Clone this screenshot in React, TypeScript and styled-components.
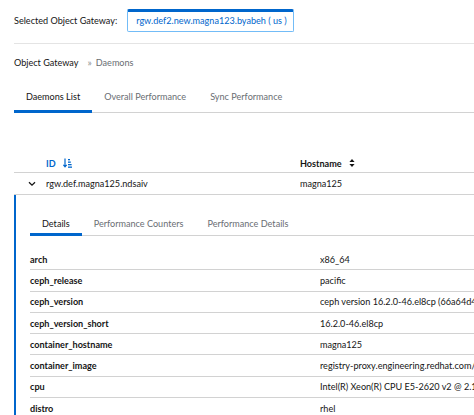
import React from "react";
import styled, { createGlobalStyle } from "styled-components";

const Global = createGlobalStyle`
  html, body { margin: 0; padding: 0; background: #fff; }
  body { font-family: Lato, "Liberation Sans", sans-serif; font-size: 9.1px; color: #151515; }
  * { box-sizing: border-box; }
`;

const Page = styled.div`
  width: 474px;
  height: 415px;
  overflow: hidden;
  padding-left: 14px;
`;

const GatewayBar = styled.div`
  display: flex;
  align-items: center;
  gap: 10px;
  padding-top: 9px;
  padding-bottom: 11px;
  border-bottom: 1px solid #e4e4e4;
`;

const Label = styled.span`
  color: #151515;
`;

const GatewayBox = styled.div`
  height: 23px;
  width: 167px;
  border: 1px solid #73bcf7;
  border-top: 3px solid #06c;
  border-radius: 2px;
  color: #06c;
  display: flex;
  align-items: center;
  padding-left: 8px;
  padding-bottom: 2px;
  white-space: nowrap;
`;

const Breadcrumb = styled.div`
  display: flex;
  align-items: center;
  height: 36px;
  gap: 9px;
`;

const Crumb = styled.span<{ $active?: boolean }>`
  color: ${(p) => (p.$active ? "#6a6e73" : "#151515")};
`;

const Sep = styled.span`
  color: #8a8d90;
  font-size: 10px;
  margin-right: -5px;
`;

const Tabs = styled.div`
  display: flex;
  border-bottom: 1px solid #d2d2d2;
`;

const Tab = styled.div<{ $active?: boolean; $pt?: number }>`
  padding: ${(p) => p.$pt ?? 3}px 12px 0;
  height: 33px;
  display: flex;
  align-items: center;
  color: ${(p) => (p.$active ? "#151515" : "#6a6e73")};
  border-bottom: 3px solid ${(p) => (p.$active ? "#06c" : "transparent")};
  margin-bottom: -1px;
  white-space: nowrap;
`;

const Table = styled.div`
  margin-top: 38px;
`;

const HeadRow = styled.div`
  display: grid;
  grid-template-columns: 32px 254px 1fr;
  height: 22px;
  padding-top: 3px;
  align-items: center;
  border-bottom: 1px solid #d2d2d2;
`;

const HeadCell = styled.div<{ $blue?: boolean }>`
  display: flex;
  align-items: center;
  gap: 7px;
  font-weight: 700;
  color: ${(p) => (p.$blue ? "#06c" : "#151515")};
`;

const Row = styled.div`
  display: grid;
  grid-template-columns: 32px 254px 1fr;
  height: 22px;
  align-items: center;
  border-bottom: 1px solid #d2d2d2;
`;

const Toggle = styled.div`
  display: flex;
  justify-content: center;
  padding-left: 3px;
  padding-top: 1px;
`;

const Expanded = styled.div`
  border-left: 2px solid #06c;
  padding-left: 14px;
  padding-top: 8px;
`;

const DetailTable = styled.div`
  margin-top: 13px;
`;

const DetailRow = styled.div`
  display: grid;
  grid-template-columns: 290px 1fr;
  height: 21.3px;
  align-items: center;
  border-bottom: 1px solid #d2d2d2;
  white-space: nowrap;
`;

const Key = styled.div`
  font-weight: 700;
`;

const Value = styled.div`
  color: #151515;
  overflow: hidden;
`;

const SortAmount = () => (
  <svg width="9" height="10" viewBox="0 0 9 10">
    <path d="M2 0.5 V8.5 M0.3 6.8 L2 8.8 L3.7 6.8" stroke="#06c" strokeWidth="1.2" fill="none" />
    <rect x="5" y="1" width="2" height="1.3" fill="#06c" />
    <rect x="5" y="3.5" width="2.8" height="1.3" fill="#06c" />
    <rect x="5" y="6" width="3.6" height="1.3" fill="#06c" />
    <rect x="5" y="8.5" width="4" height="1.3" fill="#06c" />
  </svg>
);

const SortBoth = () => (
  <svg width="6" height="8" viewBox="0 0 6 8">
    <path d="M3 0 L5.6 3 H0.4 Z M3 8 L5.6 5 H0.4 Z" fill="#151515" />
  </svg>
);

const Chevron = () => (
  <svg width="8" height="6" viewBox="0 0 8 6">
    <path d="M1 1.2 L4 4.2 L7 1.2" stroke="#151515" strokeWidth="1.3" fill="none" />
  </svg>
);

const details: [string, string][] = [
  ["arch", "x86_64"],
  ["ceph_release", "pacific"],
  ["ceph_version", "ceph version 16.2.0-46.el8cp (66a64d40"],
  ["ceph_version_short", "16.2.0-46.el8cp"],
  ["container_hostname", "magna125"],
  ["container_image", "registry-proxy.engineering.redhat.com/rh"],
  ["cpu", "Intel(R) Xeon(R) CPU E5-2620 v2 @ 2.10"],
  ["distro", "rhel"],
];

export default function App() {
  return (
    <Page>
      <Global />
      <GatewayBar>
        <Label>Selected Object Gateway:</Label>
        <GatewayBox>rgw.def2.new.magna123.byabeh ( us )</GatewayBox>
      </GatewayBar>
      <Breadcrumb>
        <Crumb>Object Gateway</Crumb>
        <Sep>»</Sep>
        <Crumb $active>Daemons</Crumb>
      </Breadcrumb>
      <Tabs>
        <Tab $active>Daemons List</Tab>
        <Tab>Overall Performance</Tab>
        <Tab>Sync Performance</Tab>
      </Tabs>
      <Table>
        <HeadRow>
          <div />
          <HeadCell $blue>
            ID <SortAmount />
          </HeadCell>
          <HeadCell>
            Hostname <SortBoth />
          </HeadCell>
        </HeadRow>
        <Row>
          <Toggle>
            <Chevron />
          </Toggle>
          <div>rgw.def.magna125.ndsaiv</div>
          <div>magna125</div>
        </Row>
        <Expanded>
          <Tabs>
            <Tab $active $pt={10}>Details</Tab>
            <Tab $pt={10}>Performance Counters</Tab>
            <Tab $pt={10}>Performance Details</Tab>
          </Tabs>
          <DetailTable>
            {details.map(([k, v]) => (
              <DetailRow key={k}>
                <Key>{k}</Key>
                <Value>{v}</Value>
              </DetailRow>
            ))}
          </DetailTable>
        </Expanded>
      </Table>
    </Page>
  );
}
